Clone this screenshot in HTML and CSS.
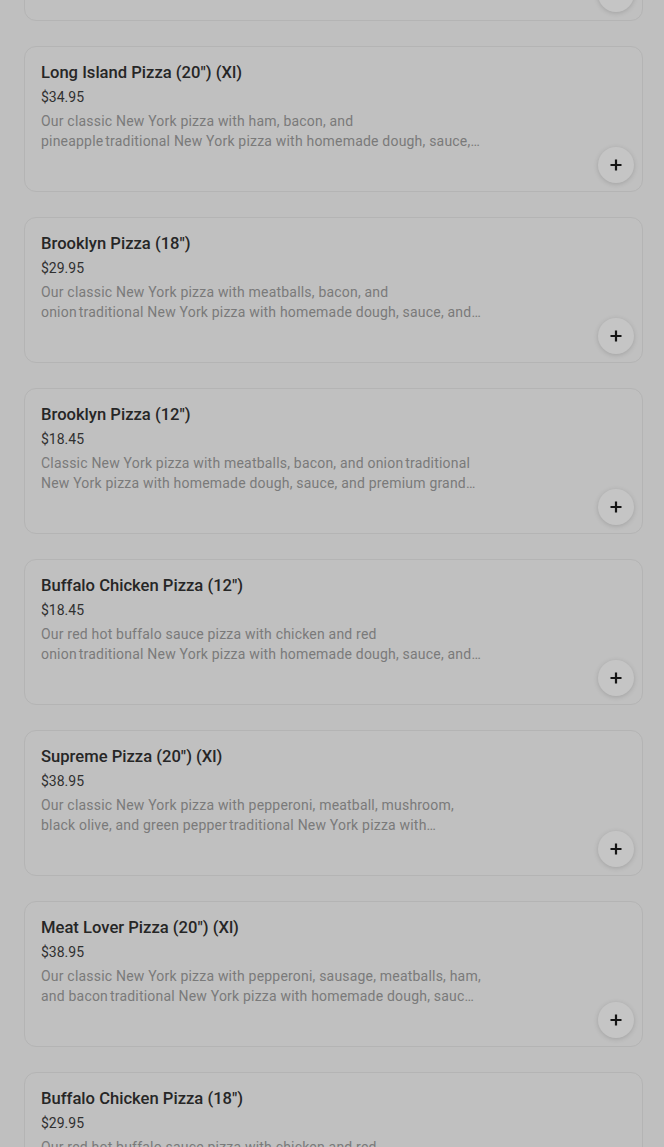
FILE: index.html
```html
<!DOCTYPE html>
<html lang="en">
<head>
<meta charset="utf-8">
<title>Menu</title>
<link rel="stylesheet" href="styles.css">
</head>
<body>
<div class="list">
  <div class="card">
    <div class="info">
      <div class="title">New York Pizza (20") (Xl)</div>
      <div class="price">$32.95</div>
      <div class="desc">Our classic New York pizza with homemade dough, sauce, and premium grande mozzarella cheese.</div>
    </div>
    <button class="add" aria-label="Add"><svg viewBox="0 0 12 12" width="12" height="12"><path d="M6 0.5v11M0.5 6h11" stroke="#151515" stroke-width="2.2"/></svg></button>
  </div>
  <div class="card">
    <div class="info">
      <div class="title">Long Island Pizza (20") (Xl)</div>
      <div class="price">$34.95</div>
      <div class="desc">Our classic New York pizza with ham, bacon, and pineapple&#8239;traditional New York pizza with homemade dough, sauce, and premium grande mozzarella cheese.</div>
    </div>
    <button class="add" aria-label="Add"><svg viewBox="0 0 12 12" width="12" height="12"><path d="M6 0.5v11M0.5 6h11" stroke="#151515" stroke-width="2.2"/></svg></button>
  </div>
  <div class="card">
    <div class="info">
      <div class="title">Brooklyn Pizza (18")</div>
      <div class="price">$29.95</div>
      <div class="desc">Our classic New York pizza with meatballs, bacon, and onion&#8239;traditional New York pizza with homemade dough, sauce, and premium grande mozzarella cheese.</div>
    </div>
    <button class="add" aria-label="Add"><svg viewBox="0 0 12 12" width="12" height="12"><path d="M6 0.5v11M0.5 6h11" stroke="#151515" stroke-width="2.2"/></svg></button>
  </div>
  <div class="card">
    <div class="info">
      <div class="title">Brooklyn Pizza (12")</div>
      <div class="price">$18.45</div>
      <div class="desc">Classic New York pizza with meatballs, bacon, and onion&#8239;traditional New York pizza with homemade dough, sauce, and premium grande mozzarella cheese.</div>
    </div>
    <button class="add" aria-label="Add"><svg viewBox="0 0 12 12" width="12" height="12"><path d="M6 0.5v11M0.5 6h11" stroke="#151515" stroke-width="2.2"/></svg></button>
  </div>
  <div class="card">
    <div class="info">
      <div class="title">Buffalo Chicken Pizza (12")</div>
      <div class="price">$18.45</div>
      <div class="desc">Our red hot buffalo sauce pizza with chicken and red onion&#8239;traditional New York pizza with homemade dough, sauce, and premium grande mozzarella cheese.</div>
    </div>
    <button class="add" aria-label="Add"><svg viewBox="0 0 12 12" width="12" height="12"><path d="M6 0.5v11M0.5 6h11" stroke="#151515" stroke-width="2.2"/></svg></button>
  </div>
  <div class="card">
    <div class="info">
      <div class="title">Supreme Pizza (20") (Xl)</div>
      <div class="price">$38.95</div>
      <div class="desc">Our classic New York pizza with pepperoni, meatball, mushroom, black olive, and green pepper&#8239;traditional New York pizza with homemade dough, sauce, and premium grande mozzarella cheese.</div>
    </div>
    <button class="add" aria-label="Add"><svg viewBox="0 0 12 12" width="12" height="12"><path d="M6 0.5v11M0.5 6h11" stroke="#151515" stroke-width="2.2"/></svg></button>
  </div>
  <div class="card">
    <div class="info">
      <div class="title">Meat Lover Pizza (20") (Xl)</div>
      <div class="price">$38.95</div>
      <div class="desc">Our classic New York pizza with pepperoni, sausage, meatballs, ham, and bacon&#8239;traditional New York pizza with homemade dough, sauce, and premium grande mozzarella cheese.</div>
    </div>
    <button class="add" aria-label="Add"><svg viewBox="0 0 12 12" width="12" height="12"><path d="M6 0.5v11M0.5 6h11" stroke="#151515" stroke-width="2.2"/></svg></button>
  </div>
  <div class="card">
    <div class="info">
      <div class="title">Buffalo Chicken Pizza (18")</div>
      <div class="price">$29.95</div>
      <div class="desc">Our red hot buffalo sauce pizza with chicken and red onion&#8239;traditional New York pizza with homemade dough, sauce, and premium grande mozzarella cheese.</div>
    </div>
    <button class="add" aria-label="Add"><svg viewBox="0 0 12 12" width="12" height="12"><path d="M6 0.5v11M0.5 6h11" stroke="#151515" stroke-width="2.2"/></svg></button>
  </div>
</div>
</body>
</html>
```
FILE: styles.css
```css
html, body {
  margin: 0;
  padding: 0;
  background: #bfbfbf;
  overflow: hidden;
}
body {
  font-family: Roboto, "Liberation Sans", sans-serif;
}
.list {
  display: flex;
  flex-direction: column;
  gap: 25px;
  padding: 0 21px 0 24px;
  margin-top: -125px;
}
.card {
  box-sizing: border-box;
  height: 146px;
  border: 1px solid #b4b4b4;
  border-radius: 12px;
  background: #c0c0c0;
  display: flex;
  justify-content: space-between;
  padding: 15px 8px 8px 16px;
}
.info {
  width: 440px;
}
.title {
  font-size: 16.6px;
  line-height: 22px;
  font-weight: 500;
  color: #262626;
}
.price {
  margin-top: 3px;
  font-size: 14px;
  line-height: 20px;
  color: #303030;
}
.desc {
  margin-top: 4px;
  font-size: 14px;
  line-height: 20px;
  letter-spacing: 0.2px;
  color: #7a7a7a;
  display: -webkit-box;
  -webkit-line-clamp: 2;
  -webkit-box-orient: vertical;
  overflow: hidden;
}
.add {
  align-self: flex-end;
  width: 36px;
  height: 36px;
  border-radius: 50%;
  border: none;
  background: #c5c5c5;
  box-shadow: 0 1px 5px rgba(0,0,0,0.16);
  display: flex;
  align-items: center;
  justify-content: center;
  padding: 0;
}
```
